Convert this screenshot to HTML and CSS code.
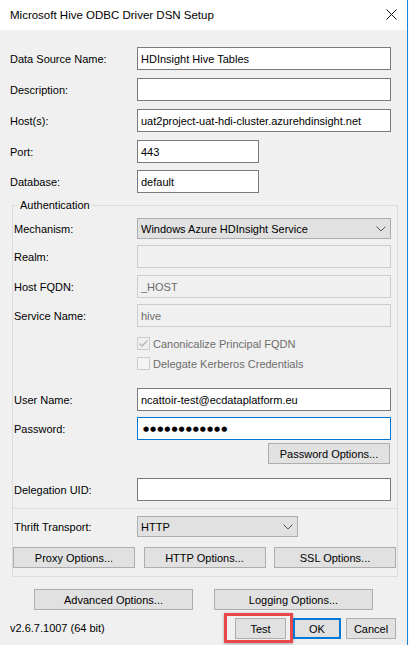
FILE: index.html
```html
<!DOCTYPE html>
<html>
<head>
<meta charset="utf-8">
<title>Microsoft Hive ODBC Driver DSN Setup</title>
<link rel="stylesheet" href="styles.css">
</head>
<body>
<div class="window">
  <div class="titlebar">
    <span class="title">Microsoft Hive ODBC Driver DSN Setup</span>
    <svg class="close" width="11" height="11" viewBox="0 0 11 11"><path d="M0.5 0.5 L10.5 10.5 M10.5 0.5 L0.5 10.5" stroke="#111" stroke-width="1" fill="none"/></svg>
  </div>
  <div class="client">
    <div class="row top first"><span class="label">Data Source Name:</span><span class="edit wide">HDInsight Hive Tables</span></div>
    <div class="row top"><span class="label">Description:</span><span class="edit wide"></span></div>
    <div class="row top"><span class="label">Host(s):</span><span class="edit wide">uat2project-uat-hdi-cluster.azurehdinsight.net</span></div>
    <div class="row top"><span class="label">Port:</span><span class="edit short">443</span></div>
    <div class="row top db"><span class="label">Database:</span><span class="edit short">default</span></div>

    <fieldset class="group">
      <legend>Authentication</legend>
      <div class="row g mech"><span class="label">Mechanism:</span><span class="combo wide"><span>Windows Azure HDInsight Service</span><svg class="chev" width="10" height="6" viewBox="0 0 10 6"><path d="M0.5 0.5 L5 5 L9.5 0.5" stroke="#555" stroke-width="1" fill="none"/></svg></span></div>
      <div class="row g realm"><span class="label">Realm:</span><span class="edit wide disabled"></span></div>
      <div class="row g fqdn"><span class="label">Host FQDN:</span><span class="edit wide disabled">_HOST</span></div>
      <div class="row g svc"><span class="label">Service Name:</span><span class="edit wide disabled">hive</span></div>
      <div class="check canon"><svg class="box" width="13" height="13" viewBox="0 0 13 13"><rect x="0.5" y="0.5" width="12" height="12" fill="#f0f0f0" stroke="#cccccc"/><path d="M2.5 6.5 L5 9 L10.5 3.5" stroke="#b4b4b4" stroke-width="1.3" fill="none"/></svg><span class="ctext">Canonicalize Principal FQDN</span></div>
      <div class="check deleg"><svg class="box" width="13" height="13" viewBox="0 0 13 13"><rect x="0.5" y="0.5" width="12" height="12" fill="#f4f4f4" stroke="#cccccc"/></svg><span class="ctext">Delegate Kerberos Credentials</span></div>
      <div class="row g user"><span class="label">User Name:</span><span class="edit wide">ncattoir-test@ecdataplatform.eu</span></div>
      <div class="row g pass"><span class="label">Password:</span><span class="edit wide focused"><span class="dots">●●●●●●●●●●●●</span></span></div>
      <div class="pwopts"><button class="btn pw">Password Options...</button></div>
      <div class="row g deluid"><span class="label">Delegation UID:</span><span class="edit wide"></span></div>
      <div class="sep"></div>
      <div class="row g thrift"><span class="label">Thrift Transport:</span><span class="combo mid"><span>HTTP</span><svg class="chev" width="10" height="6" viewBox="0 0 10 6"><path d="M0.5 0.5 L5 5 L9.5 0.5" stroke="#555" stroke-width="1" fill="none"/></svg></span></div>
      <div class="btnrow">
        <button class="btn opt">Proxy Options...</button>
        <button class="btn opt">HTTP Options...</button>
        <button class="btn opt">SSL Options...</button>
      </div>
    </fieldset>

    <div class="advrow">
      <button class="btn adv">Advanced Options...</button>
      <button class="btn adv">Logging Options...</button>
    </div>

    <div class="footer">
      <span class="version">v2.6.7.1007 (64 bit)</span>
      <div class="actions">
        <span class="highlight"><button class="btn test">Test</button></span>
        <button class="btn ok">OK</button>
        <button class="btn cancel">Cancel</button>
      </div>
    </div>
  </div>
</div>
</body>
</html>
```

FILE: styles.css
```css
html, body {
  margin: 0;
  padding: 0;
}

body {
  width: 409px;
  height: 645px;
  overflow: hidden;
  background: #f6f6f6;
  font-family: "Liberation Sans", Arial, sans-serif;
  font-size: 11px;
  color: #000;
}

.window {
  width: 407px;
  height: 645px;
  background: #f0f0f0;
  border-right: 1px solid #1883d7;
}

.titlebar {
  box-sizing: border-box;
  height: 30px;
  background: #fff;
  display: flex;
  align-items: center;
  justify-content: space-between;
  padding: 0 10px;
}

.title {
  font-size: 11.5px;
  color: #000;
}

.close {
  display: block;
  margin-top: -1px;
}

.client {
  padding-top: 17px;
}

.row {
  display: flex;
  align-items: center;
}

.row.top {
  height: 23px;
  margin-top: 8px;
  padding-left: 10px;
}

.row.top.first {
  margin-top: 0;
}

.row.top.db {
  margin-top: 7px;
}

.row.top .label {
  width: 127px;
  flex: none;
}

.edit {
  box-sizing: border-box;
  height: 23px;
  border: 1px solid #7a7a7a;
  background: #fff;
  padding: 0 3px;
  display: flex;
  align-items: center;
  white-space: nowrap;
  overflow: hidden;
  flex: none;
}

.wide {
  width: 254px;
}

.short {
  width: 122px;
}

.mid {
  width: 161px;
}

.edit.disabled {
  border-color: #cccccc;
  background: #f0f0f0;
  color: #6d6d6d;
}

.edit.focused {
  border-color: #0078d7;
}

.dots {
  font-family: "DejaVu Sans", sans-serif;
  font-size: 7px;
  letter-spacing: 1px;
  padding-left: 2px;
}

.combo {
  box-sizing: border-box;
  height: 21px;
  background: #e1e1e1;
  border: 1px solid #adadad;
  padding: 0 4px 0 3px;
  display: flex;
  align-items: center;
  justify-content: space-between;
  flex: none;
}

.chev {
  display: block;
}

.group {
  box-sizing: border-box;
  width: 386px;
  min-width: 0;
  margin: 5px 0 0 12px;
  padding: 0 0 8px 0;
  border: 1px solid #dcdcdc;
}

.group legend {
  margin-left: 5px;
  padding: 0 2px;
  line-height: 14px;
}

.row.g {
  height: 23px;
  padding-left: 1px;
}

.row.g .label {
  width: 123px;
  flex: none;
}

.row.mech {
  height: 21px;
  margin-top: 6px;
}

.row.realm {
  margin-top: 6px;
}

.row.fqdn {
  margin-top: 7px;
}

.row.svc {
  margin-top: 6px;
}

.check {
  display: flex;
  align-items: center;
  height: 13px;
  padding-left: 124px;
}

.check .box {
  display: block;
  flex: none;
}

.check .ctext {
  margin-left: 3px;
  color: #6d6d6d;
}

.check.canon {
  margin-top: 10px;
}

.check.deleg {
  margin-top: 7px;
}

.row.user {
  margin-top: 18px;
}

.row.pass {
  margin-top: 6px;
}

.pwopts {
  display: flex;
  justify-content: flex-end;
  padding-right: 7px;
  margin-top: 3px;
}

.row.deluid {
  margin-top: 14px;
}

.sep {
  height: 1px;
  background: #dcdcdc;
  margin-top: 7px;
}

.row.thrift {
  height: 21px;
  margin-top: 7px;
}

.btnrow {
  display: flex;
  justify-content: space-between;
  padding-right: 1px;
  margin-top: 10px;
}

.btn {
  font-family: inherit;
  font-size: 11px;
  color: #000;
  box-sizing: border-box;
  height: 21px;
  background: #e1e1e1;
  border: 1px solid #adadad;
  padding: 0;
  margin: 0;
  flex: none;
}

.btn.pw {
  width: 122px;
}

.btn.opt {
  width: 122px;
}

.advrow {
  display: flex;
  gap: 21px;
  padding-left: 34px;
  margin-top: 12px;
}

.btn.adv {
  width: 159px;
}

.footer {
  display: flex;
  align-items: center;
  justify-content: space-between;
  height: 30px;
  margin-top: 3px;
  padding: 0 11px 0 10px;
}

.actions {
  display: flex;
  align-items: flex-start;
  height: 30px;
}

.highlight {
  display: block;
  border: 3px solid #e8474b;
  padding: 2px 4px 1px 8px;
  box-shadow: 0 1px 3px rgba(0, 0, 0, 0.3);
}

.btn.test {
  display: block;
  width: 51px;
}

.btn.ok {
  width: 48px;
  margin-top: 5px;
  border: 2px solid #0078d7;
}

.btn.cancel {
  width: 50px;
  margin-top: 5px;
  margin-left: 5px;
}
```
